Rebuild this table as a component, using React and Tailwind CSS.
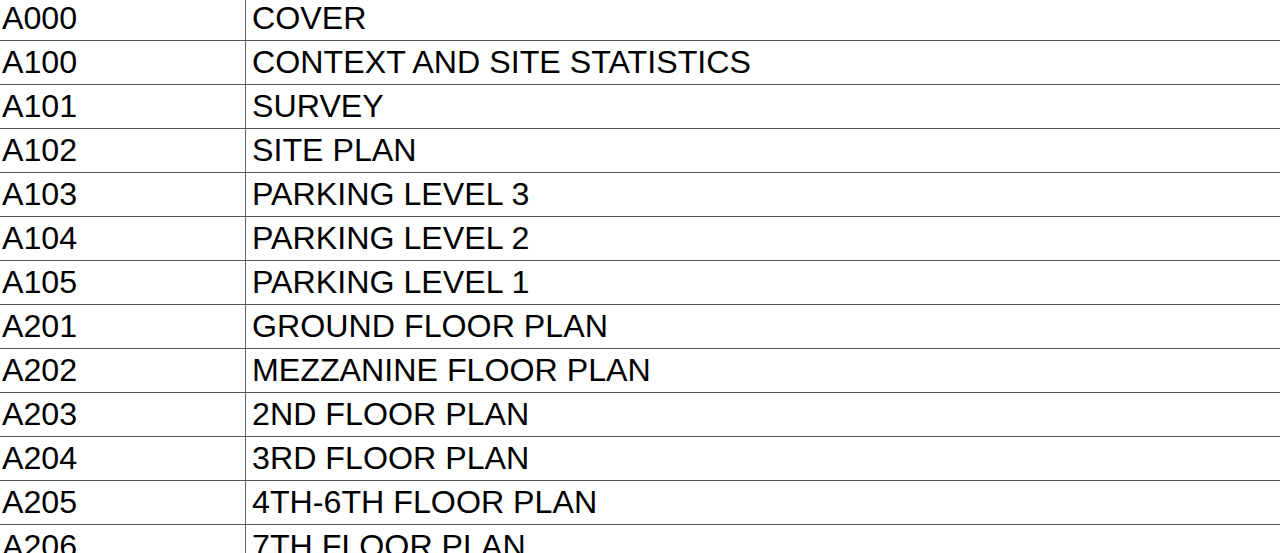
const rows = [
  ["A000", "COVER"],
  ["A100", "CONTEXT AND SITE STATISTICS"],
  ["A101", "SURVEY"],
  ["A102", "SITE PLAN"],
  ["A103", "PARKING LEVEL 3"],
  ["A104", "PARKING LEVEL 2"],
  ["A105", "PARKING LEVEL 1"],
  ["A201", "GROUND FLOOR PLAN"],
  ["A202", "MEZZANINE FLOOR PLAN"],
  ["A203", "2ND FLOOR PLAN"],
  ["A204", "3RD FLOOR PLAN"],
  ["A205", "4TH-6TH FLOOR PLAN"],
  ["A206", "7TH FLOOR PLAN"],
]

export default function App() {
  return (
    <div className="h-[553px] w-[1280px] overflow-hidden bg-white">
      <div
        className="mt-[-3px] text-[32.2px] text-black"
        style={{ fontFamily: '"Liberation Sans", Arial, sans-serif' }}
      >
        {rows.map(([code, title]) => (
          <div key={code} className="flex h-[44px] border-b border-[#555]">
            <div className="flex w-[246px] shrink-0 items-center border-r border-[#666] pl-[2px] leading-none">
              {code}
            </div>
            <div className="flex flex-1 items-center pl-[6px] leading-none">{title}</div>
          </div>
        ))}
      </div>
    </div>
  )
}
